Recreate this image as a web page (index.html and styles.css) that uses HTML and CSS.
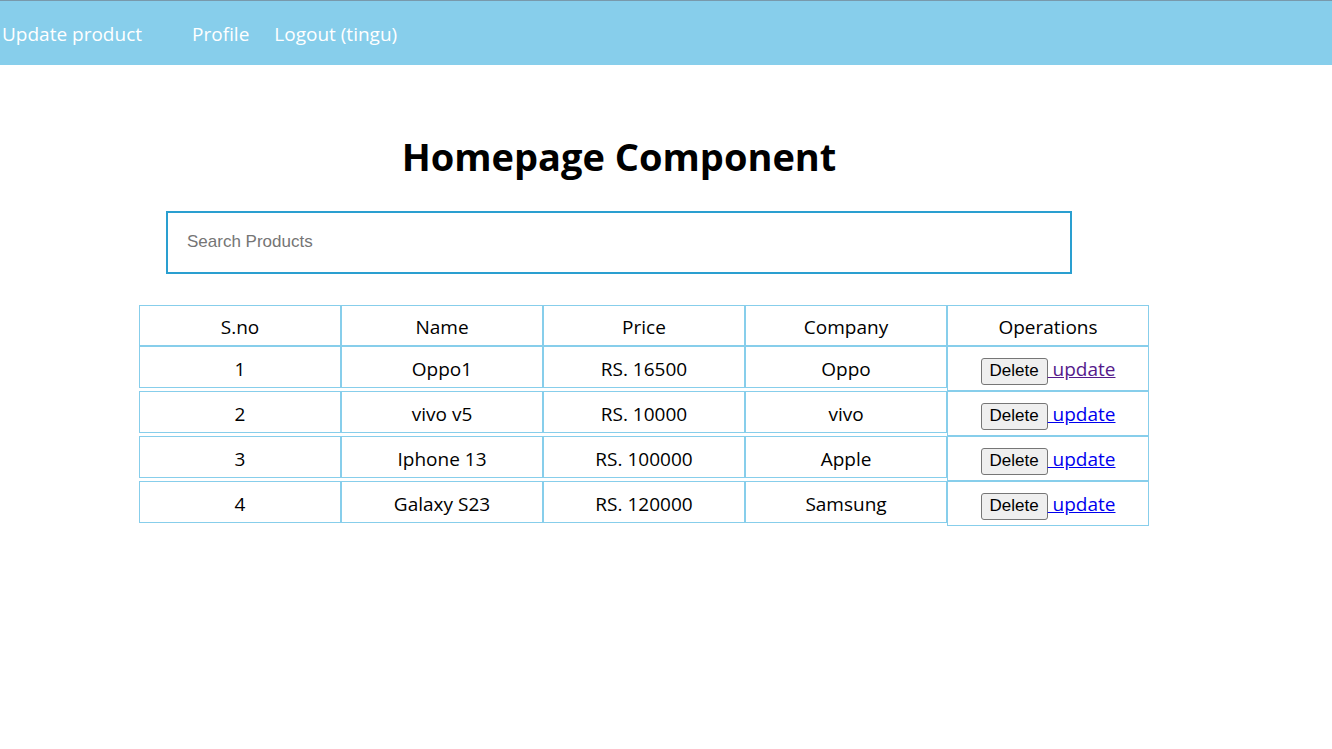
FILE: index.html
```html
<!DOCTYPE html>
<html lang="en">
<head>
<meta charset="utf-8">
<meta name="viewport" content="width=device-width, initial-scale=1">
<title>Homepage Component</title>
<link rel="stylesheet" href="styles.css">
</head>
<body>
<nav class="navbar">
  <ul class="nav-list">
    <li class="nav-item nav-item-wide"><a class="nav-link" href="#">Update product</a></li>
    <li class="nav-item"><a class="nav-link" href="#">Profile</a></li>
    <li class="nav-item"><a class="nav-link" href="#">Logout (tingu)</a></li>
  </ul>
</nav>
<main class="page">
  <header class="intro">
    <h1 class="title">Homepage Component</h1>
    <input class="search" type="text" placeholder="Search Products" aria-label="Search Products">
  </header>
  <table class="products">
    <thead>
      <tr class="row row-head"><th class="cell">S.no</th><th class="cell">Name</th><th class="cell">Price</th><th class="cell">Company</th><th class="cell">Operations</th></tr>
    </thead>
    <tbody>
      <tr class="row"><td class="cell">1</td><td class="cell">Oppo1</td><td class="cell">RS. 16500</td><td class="cell">Oppo</td><td class="cell cell-ops"><button class="delete" type="button">Delete</button><a class="update update-visited" href="#">&nbsp;update</a></td></tr>
      <tr class="row"><td class="cell">2</td><td class="cell">vivo v5</td><td class="cell">RS. 10000</td><td class="cell">vivo</td><td class="cell cell-ops"><button class="delete" type="button">Delete</button><a class="update" href="#">&nbsp;update</a></td></tr>
      <tr class="row"><td class="cell">3</td><td class="cell">Iphone 13</td><td class="cell">RS. 100000</td><td class="cell">Apple</td><td class="cell cell-ops"><button class="delete" type="button">Delete</button><a class="update" href="#">&nbsp;update</a></td></tr>
      <tr class="row"><td class="cell">4</td><td class="cell">Galaxy S23</td><td class="cell">RS. 120000</td><td class="cell">Samsung</td><td class="cell cell-ops"><button class="delete" type="button">Delete</button><a class="update" href="#">&nbsp;update</a></td></tr>
    </tbody>
  </table>
</main>
</body>
</html>
```
FILE: styles.css
```css
* {
  box-sizing: border-box;
}

body {
  margin: 0;
  background: #fff;
  color: #000;
  font-family: "Segoe UI", "Open Sans", "Noto Sans", sans-serif;
  font-size: 19px;
  line-height: 26px;
}

.navbar {
  border-top: 1px solid #7899ab;
  background: #87ceeb;
}

.nav-list {
  display: flex;
  gap: 25px;
  margin: 0;
  padding: 20px 2px 18px;
  list-style: none;
}

.nav-item-wide {
  margin-right: 25px;
}

.nav-link {
  color: #fff;
  text-decoration: none;
}

.page {
  padding: 64px 183px 0 139px;
}

.intro {
  margin: 0 77px 31px 27px;
}

.title {
  margin: 0 0 28px;
  font-size: 38px;
  font-weight: 700;
  line-height: 54px;
  text-align: center;
}

.search {
  display: block;
  width: 100%;
  height: 63px;
  padding: 0 19px 2px;
  border: 2px solid #2a9fd0;
  border-radius: 0;
  background: #fff;
  font-family: "Liberation Sans", Arial, sans-serif;
  font-size: 17px;
}

.search::placeholder {
  color: #757575;
  opacity: 1;
}

.products,
.products thead,
.products tbody {
  display: block;
}

.row {
  display: flex;
  align-items: flex-start;
}

.cell {
  display: block;
  flex: 1 1 0;
  min-width: 0;
  padding: 9px 0 5px;
  border: 1px solid #87ceeb;
  font-weight: 400;
  text-align: center;
}

.row-head .cell {
  padding-top: 8px;
}

.cell-ops {
  min-height: 45px;
}

.delete {
  height: 27px;
  padding: 0 8px;
  border: 1px solid #767676;
  border-radius: 3px;
  background: #efefef;
  color: #000;
  font-family: "Liberation Sans", Arial, sans-serif;
  font-size: 17px;
}

.update {
  color: #0000ee;
}

.update-visited {
  color: #551a8b;
}
```
